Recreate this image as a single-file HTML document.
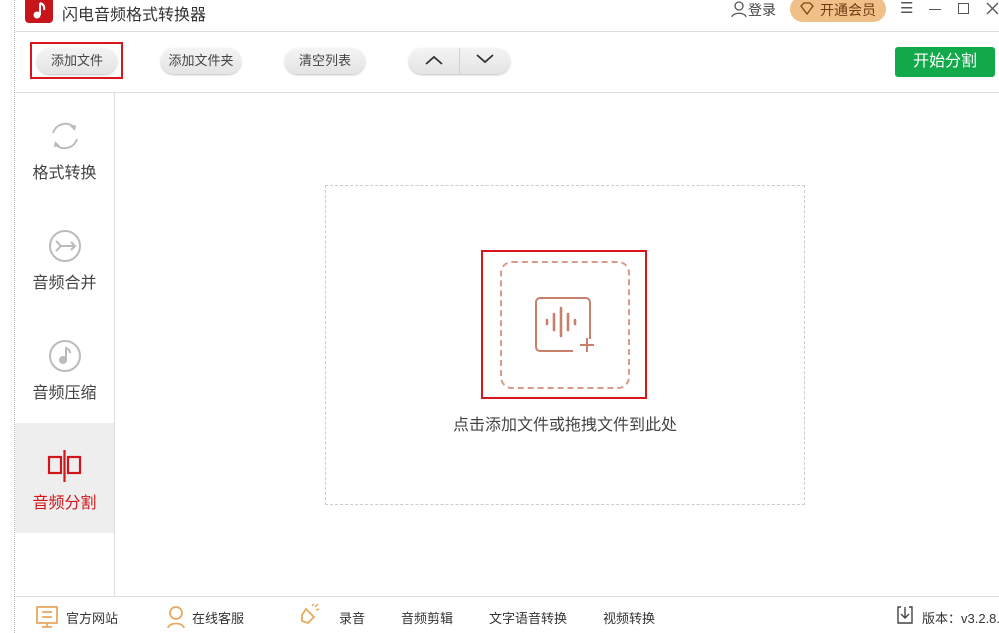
<!DOCTYPE html>
<html><head><meta charset="utf-8"><style>
*{margin:0;padding:0;box-sizing:border-box}
body{width:999px;height:633px;overflow:hidden;background:#fff;font-family:"Liberation Sans","Noto Sans CJK SC",sans-serif;color:#333;position:relative}
.abs{position:absolute}
.pill{position:absolute;top:48px;height:26px;border-radius:13px;background:linear-gradient(#f4f4f4,#e4e4e4);box-shadow:0 1px 2px rgba(0,0,0,.25);font-size:13px;color:#444;text-align:center;line-height:26px}
.side{position:absolute;left:15px;width:99px;text-align:center;font-size:16px;color:#444}
.foot{position:absolute;top:608px;font-size:13px;color:#333}
</style></head><body>
<div class="abs" style="left:14px;top:0;height:633px;border-left:1px dotted #bbb"></div>
<div class="abs" style="left:25px;top:0;width:28px;height:23px;background:#c8141b;border-radius:0 0 4px 4px"></div>
<svg class="abs" style="left:28px;top:0" width="22" height="22"><path d="M12 3v12" stroke="#fff" stroke-width="2"/><path d="M12 3c3 1 5 3 4 7" stroke="#fff" stroke-width="2" fill="none"/><circle cx="9" cy="15" r="3.5" fill="#fff"/></svg>
<div class="abs" style="left:62px;top:1px;font-size:16px;color:#333">闪电音频格式转换器</div>
<svg class="abs" style="left:730px;top:0" width="18" height="18"><circle cx="9" cy="6" r="4" fill="none" stroke="#555" stroke-width="1.3"/><path d="M2 17c1-5 13-5 14 0" fill="none" stroke="#555" stroke-width="1.3"/></svg>
<div class="abs" style="left:748px;top:0;font-size:14px;color:#444">登录</div>
<div class="abs" style="left:790px;top:-4px;width:96px;height:26px;border-radius:13px;background:#f0c088"></div>
<svg class="abs" style="left:799px;top:1px" width="16" height="16"><path d="M2 5l3-3h6l3 3-6 8z" fill="none" stroke="#7a4a1a" stroke-width="1.3"/></svg>
<div class="abs" style="left:820px;top:0;font-size:14px;color:#6b3c12">开通会员</div>
<div class="abs" style="left:900px;top:-1px;font-size:15px;color:#555">☰</div>
<div class="abs" style="left:929px;top:9px;width:12px;border-top:1px solid #555"></div>
<div class="abs" style="left:958px;top:3px;width:11px;height:11px;border:1.5px solid #555"></div>
<svg class="abs" style="left:986px;top:2px" width="13" height="13"><path d="M1 1l11 11M12 1L1 12" stroke="#555" stroke-width="1.3"/></svg>
<div class="abs" style="left:15px;top:31px;width:984px;border-top:1px solid #ddd"></div>
<div class="pill" style="left:37px;width:80px">添加文件</div>
<div class="abs" style="left:30px;top:42px;width:93px;height:37px;border:2px solid #d8161b"></div>
<div class="pill" style="left:161px;width:80px">添加文件夹</div>
<div class="pill" style="left:285px;width:80px">清空列表</div>
<div class="pill" style="left:409px;width:101px"></div>
<div class="abs" style="left:459px;top:48px;height:26px;border-left:1px solid #d0d0d0"></div>
<svg class="abs" style="left:424px;top:53px" width="20" height="14"><path d="M2 11l8-7 8 7" fill="none" stroke="#333" stroke-width="1.8"/></svg>
<svg class="abs" style="left:475px;top:52px" width="20" height="14"><path d="M2 3l8 7 8-7" fill="none" stroke="#333" stroke-width="1.8"/></svg>
<div class="abs" style="left:895px;top:47px;width:100px;height:30px;background:#12a94a;border-radius:3px;color:#fff;font-size:16px;text-align:center;line-height:30px">开始分割</div>
<div class="abs" style="left:15px;top:92px;width:984px;border-top:1px solid #ddd"></div>
<div class="abs" style="left:114px;top:93px;height:503px;border-left:1px solid #ddd"></div>
<svg class="abs" style="left:48px;top:119px" width="34" height="34"><path d="M26 8A13 13 0 0 0 5 14M8 26A13 13 0 0 0 29 20" fill="none" stroke="#bbb" stroke-width="2"/><path d="M22 7l6-1-1 6zM12 27l-6 1 1-6z" fill="#bbb"/></svg>
<div class="side" style="top:159px">格式转换</div>
<svg class="abs" style="left:48px;top:229px" width="34" height="34"><circle cx="17" cy="17" r="15" fill="none" stroke="#bbb" stroke-width="2"/><path d="M8 12l5 5-5 5M13 17h14M23 13l4 4-4 4" fill="none" stroke="#bbb" stroke-width="2"/></svg>
<div class="side" style="top:269px">音频合并</div>
<svg class="abs" style="left:48px;top:339px" width="34" height="34"><circle cx="17" cy="17" r="15" fill="none" stroke="#bbb" stroke-width="2"/><circle cx="15" cy="21" r="4" fill="#bbb"/><path d="M18 21V9c2 1 4 2 4 5" fill="none" stroke="#bbb" stroke-width="2"/></svg>
<div class="side" style="top:379px">音频压缩</div>
<div class="abs" style="left:15px;top:423px;width:99px;height:110px;background:#eee"></div>
<svg class="abs" style="left:47px;top:449px" width="36" height="34"><rect x="2" y="8" width="12" height="16" fill="none" stroke="#d0161b" stroke-width="2.2"/><rect x="21" y="8" width="12" height="16" fill="none" stroke="#d0161b" stroke-width="2.2"/><path d="M17.5 1v32" stroke="#d0161b" stroke-width="2.2"/></svg>
<div class="side" style="top:489px;color:#d0161b">音频分割</div>
<div class="abs" style="left:325px;top:185px;width:480px;height:320px;border:1px dashed #ccc"></div>
<div class="abs" style="left:481px;top:250px;width:166px;height:149px;border:2px solid #d8161b"></div>
<div class="abs" style="left:500px;top:261px;width:130px;height:128px;border:2px dashed #d99a8a;border-radius:12px"></div>
<svg class="abs" style="left:530px;top:292px" width="70" height="65"><path d="M60 47V10a4 4 0 0 0-4-4H10a4 4 0 0 0-4 4v45a4 4 0 0 0 4 4h33" fill="none" stroke="#c8806c" stroke-width="2"/><path d="M17 28v4M24 22v16M31 16v28M38 22v16M45 28v4" stroke="#c8806c" stroke-width="2.6" stroke-linecap="round"/><path d="M57 46v14M50 53h14" stroke="#c8806c" stroke-width="2"/></svg>
<div class="abs" style="left:325px;top:411px;width:480px;text-align:center;font-size:16px;color:#444">点击添加文件或拖拽文件到此处</div>
<div class="abs" style="left:15px;top:596px;width:984px;border-top:1px solid #ddd"></div>
<svg class="abs" style="left:35px;top:605px" width="24" height="24"><rect x="2" y="2" width="20" height="16" fill="none" stroke="#e8a860" stroke-width="1.8"/><path d="M7 7h10M7 12h10M12 18v4M7 22h10" stroke="#e8a860" stroke-width="1.8"/></svg>
<div class="foot" style="left:66px">官方网站</div>
<svg class="abs" style="left:165px;top:605px" width="22" height="24"><circle cx="11" cy="8" r="6" fill="none" stroke="#e8a860" stroke-width="1.8"/><path d="M3 23c1-6 15-6 16 0" fill="none" stroke="#e8a860" stroke-width="1.8"/></svg>
<div class="foot" style="left:192px">在线客服</div>
<svg class="abs" style="left:298px;top:603px" width="22" height="26"><path d="M8 6l8 8-6 6-6-2 0-6z" fill="none" stroke="#e8a860" stroke-width="1.8"/><path d="M14 3l2-2M18 7l3-1M17 4l3-3" stroke="#e8a860" stroke-width="1.5"/></svg>
<div class="foot" style="left:339px">录音</div>
<div class="foot" style="left:401px">音频剪辑</div>
<div class="foot" style="left:489px">文字语音转换</div>
<div class="foot" style="left:603px">视频转换</div>
<svg class="abs" style="left:896px;top:605px" width="18" height="20"><path d="M5 2H2v16h14V2h-3M9 2v11M5 9l4 4 4-4" fill="none" stroke="#444" stroke-width="1.4"/></svg>
<div class="foot" style="left:922px;white-space:nowrap">版本：v3.2.8.1</div>
</body></html>
